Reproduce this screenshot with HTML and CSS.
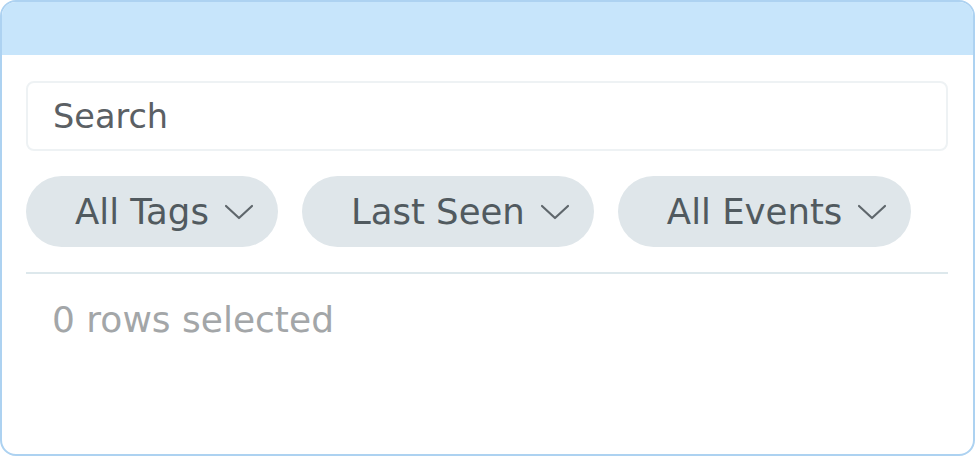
FILE: index.html
```html
<!DOCTYPE html>
<html>
<head>
<meta charset="utf-8">
<link rel="stylesheet" href="styles.css">
</head>
<body>
<div class="card">
  <div class="card-header"></div>
  <div class="card-body">
    <div class="search">Search</div>
    <div class="filters">
      <button class="chip">All Tags <svg class="chev" viewBox="0 0 30 16"><path d="M2 2 L15 14 L28 2" fill="none" stroke="currentColor" stroke-width="2.2" stroke-linecap="round" stroke-linejoin="round"/></svg></button>
      <button class="chip">Last Seen <svg class="chev" viewBox="0 0 30 16"><path d="M2 2 L15 14 L28 2" fill="none" stroke="currentColor" stroke-width="2.2" stroke-linecap="round" stroke-linejoin="round"/></svg></button>
      <button class="chip">All Events <svg class="chev" viewBox="0 0 30 16"><path d="M2 2 L15 14 L28 2" fill="none" stroke="currentColor" stroke-width="2.2" stroke-linecap="round" stroke-linejoin="round"/></svg></button>
    </div>
    <div class="divider"></div>
    <div class="status">0 rows selected</div>
  </div>
</div>
</body>
</html>
```

FILE: styles.css
```css
html, body {
  margin: 0;
  padding: 0;
  background: #ffffff;
}
.card {
  width: 975px;
  height: 456px;
  box-sizing: border-box;
  border: 2px solid #add2f1;
  border-radius: 16px;
  overflow: hidden;
  background: #ffffff;
  font-family: "DejaVu Sans", sans-serif;
}
.card-header {
  height: 53px;
  background: #c7e5fb;
}
.card-body {
  padding: 26px 25px 0 24px;
}
.search {
  height: 70px;
  box-sizing: border-box;
  border: 2px solid #eef2f4;
  border-radius: 8px;
  padding-left: 25px;
  display: flex;
  align-items: center;
  font-size: 33.5px;
  color: #5b6064;
}
.filters {
  display: flex;
  gap: 24px;
  margin-top: 25px;
}
.chip {
  height: 71px;
  border: none;
  border-radius: 36px;
  background: #dfe6ea;
  color: #515a5f;
  font-family: inherit;
  font-size: 35.5px;
  padding: 0 24px 0 49px;
  display: flex;
  align-items: center;
  gap: 15px;
}
.chev {
  width: 30px;
  height: 16px;
  color: #5f676c;
}
.divider {
  height: 2px;
  background: #dde8ec;
  margin-top: 25px;
}
.status {
  margin-top: 24px;
  padding-left: 26px;
  font-size: 36px;
  color: #a3a6a8;
  line-height: 44px;
}
```
